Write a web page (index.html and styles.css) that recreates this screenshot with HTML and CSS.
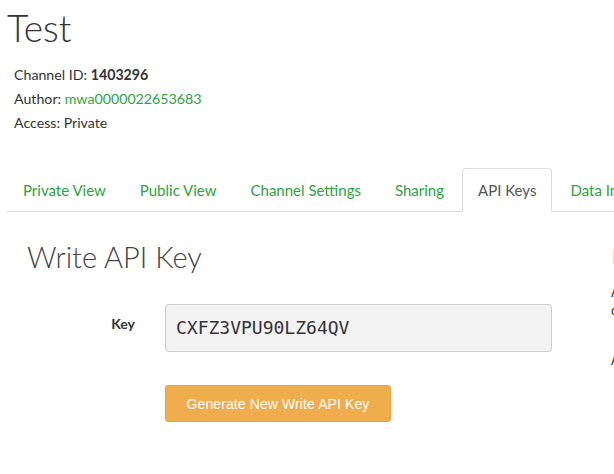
FILE: index.html
```html
<!DOCTYPE html>
<html>
<head>
<meta charset="utf-8">
<link rel="stylesheet" href="styles.css">
</head>
<body>
<div class="page">
  <h1 class="title">Test</h1>
  <div class="meta">
    <div>Channel ID: <strong>1403296</strong></div>
    <div>Author: <a class="green" href="#">mwa0000022653683</a></div>
    <div>Access: Private</div>
  </div>
  <ul class="tabs">
    <li class="tab"><a href="#">Private View</a></li>
    <li class="tab"><a href="#">Public View</a></li>
    <li class="tab"><a href="#">Channel Settings</a></li>
    <li class="tab"><a href="#">Sharing</a></li>
    <li class="tab active"><a href="#">API Keys</a></li>
    <li class="tab"><a href="#">Data Import / Export</a></li>
  </ul>
  <div class="content">
    <div class="main-col">
      <h2 class="section-title">Write API Key</h2>
      <div class="form-row">
        <label class="label">Key</label>
        <div class="key-box">CXFZ3VPU90LZ64QV</div>
      </div>
      <div class="btn-row">
        <button class="btn">Generate New Write API Key</button>
      </div>
    </div>
    <div class="side-col">
      <h3 class="help-title">Help</h3>
      <p class="help-text">API keys enable you to write data to a channel or read data from a private channel.</p>
      <p class="help-text single">API keys are auto-generated.</p>
    </div>
  </div>
</div>
</body>
</html>
```

FILE: styles.css
```css
html, body {
  margin: 0;
  padding: 0;
  background: #fff;
}
body {
  font-family: "Lato", "Noto Sans", sans-serif;
  font-size: 15px;
  color: #333;
  overflow: hidden;
  width: 614px;
  height: 474px;
}
.page {
  width: 900px;
}
.title {
  font-family: "Lato", sans-serif;
  font-weight: 300;
  font-size: 37px;
  line-height: 40px;
  color: #333;
  margin: 8px 0 0 7px;
}
.meta {
  margin: 15px 0 0 14px;
  line-height: 24px;
  font-size: 14.2px;
}
.meta strong {
  font-weight: 700;
}
.green {
  color: #2ca441;
  text-decoration: none;
}
.tabs {
  list-style: none;
  margin: 33px 0 0 7px;
  padding: 0;
  display: flex;
  border-bottom: 1px solid #ddd;
}
.tab {
  margin-right: 2px;
  margin-bottom: -1px;
}
.tab a {
  display: block;
  padding: 10px 15px;
  line-height: 22px;
  border: 1px solid transparent;
  border-radius: 4px 4px 0 0;
  color: #2ca441;
  text-decoration: none;
  font-size: 15px;
  white-space: nowrap;
}
.tab.active a {
  color: #555;
  background: #fff;
  border-color: #ddd #ddd transparent #ddd;
}
.content {
  display: flex;
}
.main-col {
  width: 584px;
  padding: 0 20px 0 27px;
  box-sizing: border-box;
  flex-shrink: 0;
}
.section-title {
  font-family: "Lato", sans-serif;
  font-weight: 300;
  font-size: 29px;
  line-height: 32px;
  color: #444;
  margin: 29px 0 0 0;
}
.form-row {
  display: flex;
  align-items: center;
  margin-top: 31px;
}
.label {
  width: 108px;
  text-align: right;
  font-weight: 700;
  font-size: 14px;
  padding-right: 30px;
  margin-top: -10px;
}
.key-box {
  width: 387px;
  height: 48px;
  box-sizing: border-box;
  border: 1px solid #ccc;
  border-radius: 4px;
  background: #f3f3f3;
  font-family: "DejaVu Sans Mono", monospace;
  font-size: 18px;
  line-height: 46px;
  padding-left: 10px;
  color: #333;
}
.btn-row {
  margin-top: 33px;
  padding-left: 138px;
}
.btn {
  background: #f0ad4e;
  border: 1px solid #eea236;
  border-radius: 3px;
  color: #fff;
  font-family: "Liberation Sans", Arial, sans-serif;
  font-size: 14px;
  letter-spacing: 0.1px;
  padding: 0 10px;
  height: 37px;
  width: 226px;
}
.side-col {
  padding-left: 27px;
  width: 260px;
  flex-shrink: 0;
}
.help-title {
  font-family: "Lato", sans-serif;
  font-weight: 300;
  font-size: 22px;
  margin: 30px 0 0 0;
  color: #f0d890;
}
.help-text {
  font-size: 13px;
  line-height: 18px;
  margin: 14px 0 0 0;
  color: #333;
}
.help-text.single {
  margin-top: 32px;
  white-space: nowrap;
}
```
